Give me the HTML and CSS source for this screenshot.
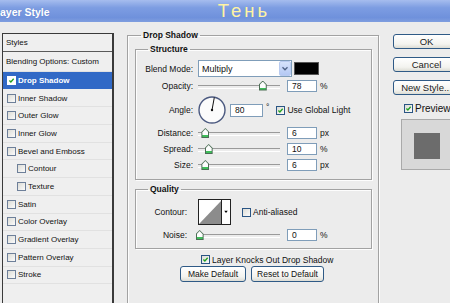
FILE: index.html
```html
<!DOCTYPE html>
<html lang="en">
<head>
    <meta charset="UTF-8">
    <title>Layer Style - Тень</title>
    <link rel="stylesheet" href="styles.css">
</head>
<body>

<div class="titlebar">
    <span class="title">ayer Style</span>
    <span class="caption">Тень</span>
</div>

<div class="dialog">
    <!-- Styles list -->
    <div class="styles-list">
        <div class="list-head">Styles</div>
        <div class="list-item blend">Blending Options: Custom</div>
        <div class="list-item selected"><span class="cb"><svg viewBox="0 0 9 9"><path d="M1.8 4.4 L3.7 6.4 L7.3 2.2"/></svg></span>Drop Shadow</div>
        <div class="list-item"><span class="cb"></span>Inner Shadow</div>
        <div class="list-item"><span class="cb"></span>Outer Glow</div>
        <div class="list-item"><span class="cb"></span>Inner Glow</div>
        <div class="list-item"><span class="cb"></span>Bevel and Emboss</div>
        <div class="list-item sub"><span class="cb"></span>Contour</div>
        <div class="list-item sub"><span class="cb"></span>Texture</div>
        <div class="list-item"><span class="cb"></span>Satin</div>
        <div class="list-item"><span class="cb"></span>Color Overlay</div>
        <div class="list-item"><span class="cb"></span>Gradient Overlay</div>
        <div class="list-item"><span class="cb"></span>Pattern Overlay</div>
        <div class="list-item"><span class="cb"></span>Stroke</div>
    </div>

    <!-- Settings -->
    <div class="settings">
        <fieldset class="group outer">
            <legend>Drop Shadow</legend>

            <fieldset class="group structure">
                <legend>Structure</legend>

                <div class="row row-blend">
                    <label class="lbl">Blend Mode:</label>
                    <div class="select">
                        <span class="select-value">Multiply</span>
                        <span class="select-btn"><svg viewBox="0 0 12 15"><path d="M3 6 L6 9 L9 6"/></svg></span>
                    </div>
                    <span class="swatch"></span>
                </div>

                <div class="row row-field">
                    <label class="lbl">Opacity:</label>
                    <div class="slider"><span class="thumb" style="left: 79%"></span></div>
                    <span class="field">78</span>
                    <span class="unit">%</span>
                </div>

                <div class="row row-angle">
                    <label class="lbl">Angle:</label>
                    <svg class="dial" viewBox="0 0 28 28">
                        <circle cx="14" cy="14" r="13" class="dial-ring"/>
                        <line x1="14" y1="14" x2="16.3" y2="1.5" class="dial-hand"/>
                        <circle cx="14" cy="14" r="1.2" class="dial-dot"/>
                    </svg>
                    <span class="field wide">80</span>
                    <span class="unit deg">°</span>
                    <span class="cb"><svg viewBox="0 0 9 9"><path d="M1.8 4.4 L3.7 6.4 L7.3 2.2"/></svg></span>
                    <span class="cb-text">Use Global Light</span>
                </div>

                <div class="row row-field gap3">
                    <label class="lbl">Distance:</label>
                    <div class="slider"><span class="thumb" style="left: 9%"></span></div>
                    <span class="field">6</span>
                    <span class="unit">px</span>
                </div>

                <div class="row row-field">
                    <label class="lbl">Spread:</label>
                    <div class="slider"><span class="thumb" style="left: 13%"></span></div>
                    <span class="field">10</span>
                    <span class="unit">%</span>
                </div>

                <div class="row row-field">
                    <label class="lbl">Size:</label>
                    <div class="slider"><span class="thumb" style="left: 9%"></span></div>
                    <span class="field">6</span>
                    <span class="unit">px</span>
                </div>
            </fieldset>

            <fieldset class="group quality">
                <legend>Quality</legend>

                <div class="row row-contour">
                    <label class="lbl">Contour:</label>
                    <svg class="contour" viewBox="0 0 24 26">
                        <rect x="0.5" y="0.5" width="23" height="25" fill="#fff"/>
                        <path d="M1 25 L23 2 L23 25 Z" fill="#8c8c8c"/>
                        <rect x="0.5" y="0.5" width="23" height="25" fill="none" stroke="#222"/>
                    </svg>
                    <span class="contour-btn"><svg viewBox="0 0 9 26"><path d="M2.5 11.5 H6.5 L4.5 14 Z"/></svg></span>
                    <span class="cb"></span>
                    <span class="cb-text">Anti-aliased</span>
                </div>

                <div class="row row-field">
                    <label class="lbl">Noise:</label>
                    <div class="slider"><span class="thumb" style="left: 2%"></span></div>
                    <span class="field">0</span>
                    <span class="unit">%</span>
                </div>
            </fieldset>

            <div class="knockout">
                <span class="cb"><svg viewBox="0 0 9 9"><path d="M1.8 4.4 L3.7 6.4 L7.3 2.2"/></svg></span>
                <span class="cb-text">Layer Knocks Out Drop Shadow</span>
            </div>

            <div class="defaults">
                <button class="btn make">Make Default</button>
                <button class="btn reset">Reset to Default</button>
            </div>
        </fieldset>
    </div>

    <!-- Dialog buttons and preview -->
    <div class="actions">
        <button class="btn side">OK</button>
        <button class="btn side">Cancel</button>
        <button class="btn side">New Style...</button>
        <div class="preview-toggle">
            <span class="cb"><svg viewBox="0 0 9 9"><path d="M1.8 4.4 L3.7 6.4 L7.3 2.2"/></svg></span>
            <span class="preview-text">Preview</span>
        </div>
        <div class="preview-box">
            <div class="preview-square"></div>
        </div>
    </div>
</div>

</body>
</html>
```

FILE: styles.css
```css
/* Global styles */
* {
    margin: 0;
    padding: 0;
    box-sizing: border-box;
}

body {
    width: 450px;
    height: 303px;
    overflow: hidden;
    background: #ececec;
    font-family: 'Liberation Sans', Arial, sans-serif;
    font-size: 8.5px;
    color: #111;
}

/* Title bar */
.titlebar {
    height: 22px;
    display: flex;
    align-items: center;
    background: linear-gradient(#a6bdee, #7d9de2 35%, #6f91dc 80%, #7f9edf);
    overflow: hidden;
    white-space: nowrap;
}

.titlebar .title {
    margin-left: 0;
    font-size: 10.5px;
    font-weight: bold;
    color: #fff;
    text-shadow: 0 0 1px #5d7cc4;
    padding-top: 2px;
}

.titlebar .caption {
    margin-left: 168px;
    font-size: 18.5px;
    letter-spacing: 3px;
    color: #fff3a3;
    line-height: 22px;
}

.dialog {
    display: flex;
    align-items: flex-start;
    width: 470px;
}

/* Styles list */
.styles-list {
    flex: none;
    margin: 11px 0 0 2px;
    width: 112px;
    height: 290px;
    border: 1px solid #3a3a3a;
    border-right-width: 2px;
    background: #efefef;
    font-size: 8px;
    overflow: hidden;
}

.list-head {
    height: 18px;
    line-height: 17px;
    padding-left: 3px;
    border-bottom: 1px solid #5a5a5a;
}

.list-item {
    height: 17.7px;
    display: flex;
    align-items: center;
    padding-left: 4px;
    border-bottom: 1px solid #e1e1e1;
    white-space: nowrap;
}

.list-item.blend {
    height: 20px;
    padding-left: 3px;
}

.list-item.sub {
    padding-left: 14px;
}

.list-item.selected {
    background: #3169c6;
    color: #fff;
    font-weight: bold;
    border-bottom-color: #efefef;
}

/* Checkbox */
.cb {
    flex: none;
    width: 9px;
    height: 9px;
    margin-right: 2px;
    border: 1px solid #2a5584;
    background: linear-gradient(135deg, #dcdcd6, #fbfbfb);
    display: flex;
}

.cb svg {
    width: 7px;
    height: 7px;
}

.cb path {
    fill: none;
    stroke: #21a121;
    stroke-width: 1.7;
}

.list-item .cb {
    border-color: #6d7f99;
}

.list-item.selected .cb {
    background: #fff;
    border-color: #fff;
}

/* Settings groups */
.settings {
    flex: none;
    width: 252px;
    margin: 8px 0 0 13px;
}

.group {
    border: 1px solid #a2a2a2;
    box-shadow: inset 1px 1px #fdfdfd, 1px 1px #fdfdfd;
    min-width: 0;
}

.group legend {
    font-weight: bold;
    line-height: 10px;
    padding: 0 2px;
}

.outer {
    width: 252px;
    height: 290px;
    padding: 4px 6px 0 7px;
}

.outer > legend {
    margin-left: 6px;
}

.structure,
.quality {
    width: 237px;
}

.structure {
    padding: 6px 0 8px 0;
}

.structure > legend,
.quality > legend {
    margin-left: 12px;
}

.quality {
    margin-top: 4px;
    padding: 5px 0 7px 0;
}

.row {
    display: flex;
    align-items: center;
    white-space: nowrap;
}

.lbl {
    flex: none;
    width: 57px;
    margin-right: 5px;
    text-align: right;
}

.quality .lbl {
    width: 51px;
    margin-right: 11px;
}

.row-blend {
    height: 17px;
}

.row-field {
    height: 12px;
    margin-top: 4px;
}

.structure .row-blend + .row-field {
    height: 13px;
    margin-top: 2px;
}

.row-field.gap3 {
    margin-top: 3px;
}

.row-angle {
    height: 28px;
    margin-top: 4px;
}

/* Select */
.select {
    flex: none;
    width: 94px;
    height: 17px;
    border: 1px solid #7f9db9;
    background: #fff;
    display: flex;
    align-items: center;
}

.select-value {
    flex: 1;
    padding-left: 3px;
    font-size: 9px;
}

.select-btn {
    width: 12px;
    height: 15px;
    background: linear-gradient(#d6e3fb, #b4c8f3);
    border: 1px solid #b9cbf0;
    border-radius: 2px;
    display: flex;
}

.select-btn svg {
    width: 100%;
    height: 100%;
}

.select-btn path {
    fill: none;
    stroke: #4d6185;
    stroke-width: 1.5;
}

.swatch {
    flex: none;
    width: 25px;
    height: 13px;
    margin-left: 2px;
    background: #000;
    border: 1px solid #555;
}

/* Slider */
.slider {
    flex: none;
    position: relative;
    width: 82px;
    height: 12px;
    margin-right: 7px;
}

.slider::before {
    content: "";
    position: absolute;
    left: 0;
    right: 0;
    top: 5px;
    height: 2px;
    border-top: 1px solid #9a9a9a;
    border-bottom: 1px solid #fff;
}

.thumb {
    position: absolute;
    top: 1px;
    width: 8px;
    height: 10px;
    transform: translateX(-50%);
    background: #4c6e55;
    clip-path: polygon(50% 0, 100% 40%, 100% 100%, 0 100%, 0 40%);
}

.thumb::after {
    content: "";
    position: absolute;
    left: 1px;
    right: 1px;
    top: 1px;
    bottom: 1px;
    background: linear-gradient(#fdfdfd 75%, #3fbf5a 75%);
    clip-path: polygon(50% 0, 100% 40%, 100% 100%, 0 100%, 0 40%);
}

.field {
    flex: none;
    width: 30px;
    height: 12px;
    border: 1px solid #7f9db9;
    background: #fff;
    line-height: 10px;
    padding-left: 4px;
}

.field.wide {
    width: 33px;
    height: 13px;
    line-height: 11px;
    margin-left: 4px;
}

.unit {
    margin-left: 3px;
}

.unit.deg {
    margin-right: 7px;
    align-self: flex-start;
    margin-top: 6px;
}

/* Angle dial */
.dial {
    flex: none;
    width: 28px;
    height: 28px;
}

.dial-ring {
    fill: #fbfbfb;
    stroke: #4c5a80;
    stroke-width: 1.4;
}

.dial-hand {
    stroke: #111;
    stroke-width: 1;
}

.dial-dot {
    fill: #111;
}

/* Contour */
.row-contour {
    height: 26px;
}

.contour {
    flex: none;
    width: 24px;
    height: 26px;
}

.contour-btn {
    flex: none;
    width: 9px;
    height: 26px;
    margin-right: 11px;
    border: 1px solid #222;
    border-left: none;
    background: #fff;
    display: flex;
}

.contour-btn svg {
    width: 100%;
    height: 100%;
}

.contour-btn path {
    fill: #000;
}

/* Bottom of the settings */
.knockout {
    display: flex;
    align-items: center;
    height: 9px;
    margin-top: 6px;
    padding-left: 66px;
    white-space: nowrap;
}

.defaults {
    display: flex;
    gap: 5px;
    margin-top: 2px;
    padding-left: 45px;
}

.btn {
    flex: none;
    height: 16px;
    font-family: 'Liberation Sans', Arial, sans-serif;
    font-size: 8.5px;
    color: #111;
    border: 1px solid #2f5a86;
    border-radius: 3px;
    background: linear-gradient(#ffffff, #f3f3ef 70%, #dcdcd4);
    white-space: nowrap;
}

.btn.make {
    width: 66px;
}

.btn.reset {
    width: 73px;
}

/* Right side */
.actions {
    flex: none;
    width: 67px;
    margin: 12px 0 0 14px;
}

.btn.side {
    display: block;
    width: 67px;
    height: 15px;
    font-size: 9.5px;
    color: #222;
    margin-bottom: 8px;
}

.btn.side + .btn.side + .btn.side {
    margin-bottom: 0;
}

.preview-toggle {
    display: flex;
    align-items: center;
    margin-top: 9px;
    padding-left: 11px;
    height: 8px;
}

.preview-text {
    font-size: 10px;
}

.preview-box {
    margin: 7px 0 0 8px;
    width: 59px;
    height: 51px;
    background: #d8d8d8;
    border: 1px solid #a9a9a9;
    padding: 13px 0 0 12px;
}

.preview-square {
    width: 26px;
    height: 26px;
    background: #6c6c6c;
}
```
